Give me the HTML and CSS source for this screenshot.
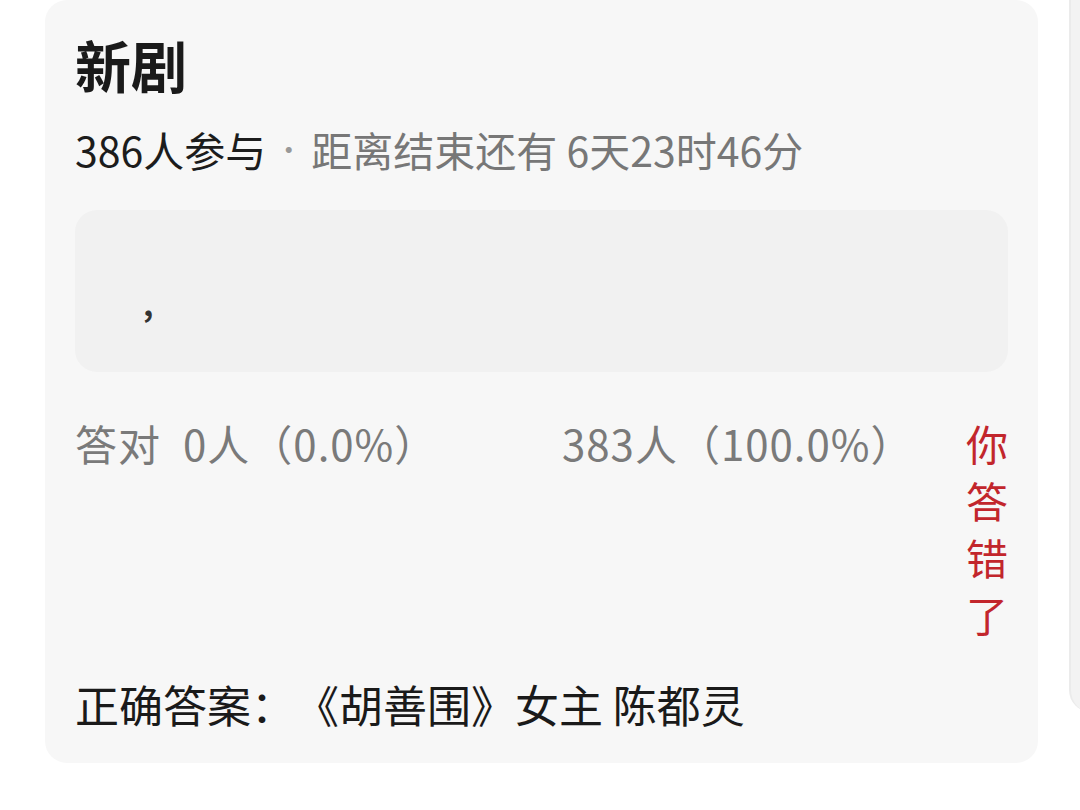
FILE: index.html
```html
<!DOCTYPE html>
<html lang="zh-CN">
<head>
  <meta charset="UTF-8" />
  <meta name="viewport" content="width=device-width, initial-scale=1.0" />
  <title>新剧</title>
  <link rel="stylesheet" href="styles.css">
</head>
<body>

<div class="quiz-list">
  <div class="quiz-card">
    <h2 class="quiz-title">新剧</h2>
    <p class="quiz-meta">386人参与<span class="dot">·</span><span class="countdown">距离结束还有 6天23时46分</span></p>

    <div class="quiz-question">
      <span>,</span>
    </div>

    <div class="quiz-result">
      <div class="result-right"><span class="label">答对</span>0人（0.0%）</div>
      <div class="result-wrong">383人（100.0%）</div>
      <div class="result-mine">你答错了</div>
    </div>

    <p class="quiz-answer">正确答案：《胡善围》女主 陈都灵</p>
  </div>

  <div class="quiz-card next"></div>
</div>

</body>
</html>
```

FILE: styles.css
```css
body {
  margin: 0;
  padding: 0;
  background: #ffffff;
  font-family: "Noto Sans CJK SC", "Noto Sans", sans-serif;
  text-spacing-trim: space-all;
  overflow: hidden;
}

.quiz-list {
  display: flex;
  gap: 31px;
  padding-left: 45px;
}

.quiz-card {
  flex: 0 0 993px;
  box-sizing: border-box;
  background: #f7f7f7;
  border-radius: 22px;
  padding: 32px 30px 31px 30px;
}

.quiz-card.next {
  flex: 0 0 400px;
  height: 712px;
  padding: 0;
  background: #f3f3f3;
  border-left: 2px solid #ebebeb;
  border-radius: 0 0 22px 22px;
}

.quiz-title {
  margin: 0;
  font-size: 56px;
  line-height: 64px;
  font-weight: 700;
  color: #1a1a1a;
}

.quiz-meta {
  margin: 25px 0 0;
  height: 56px;
  font-size: 41px;
  line-height: 56px;
  color: #1c1c1c;
}

.quiz-meta .dot {
  display: inline-block;
  vertical-align: top;
  width: 45px;
  text-align: center;
  font-size: 28px;
  color: #999999;
}

.quiz-meta .countdown {
  color: #777777;
}

.quiz-question {
  margin-top: 33px;
  height: 162px;
  box-sizing: border-box;
  padding: 64px 68px 0;
  background: #f1f1f1;
  border-radius: 22px;
  font-size: 32px;
  font-weight: 700;
  line-height: 56px;
  color: #333333;
}

.quiz-result {
  display: flex;
  margin-top: 42px;
  font-size: 42px;
  line-height: 57px;
  letter-spacing: 1px;
  color: #7a7a7a;
}

.result-right {
  width: 487px;
}

.result-right .label {
  margin-right: 22px;
}

.result-wrong {
  flex: 1;
}

.result-mine {
  width: 42px;
  letter-spacing: 0;
  color: #c2262c;
}

.quiz-answer {
  margin: 34px 0 0;
  font-size: 44px;
  line-height: 56px;
  color: #1a1a1a;
}
```
